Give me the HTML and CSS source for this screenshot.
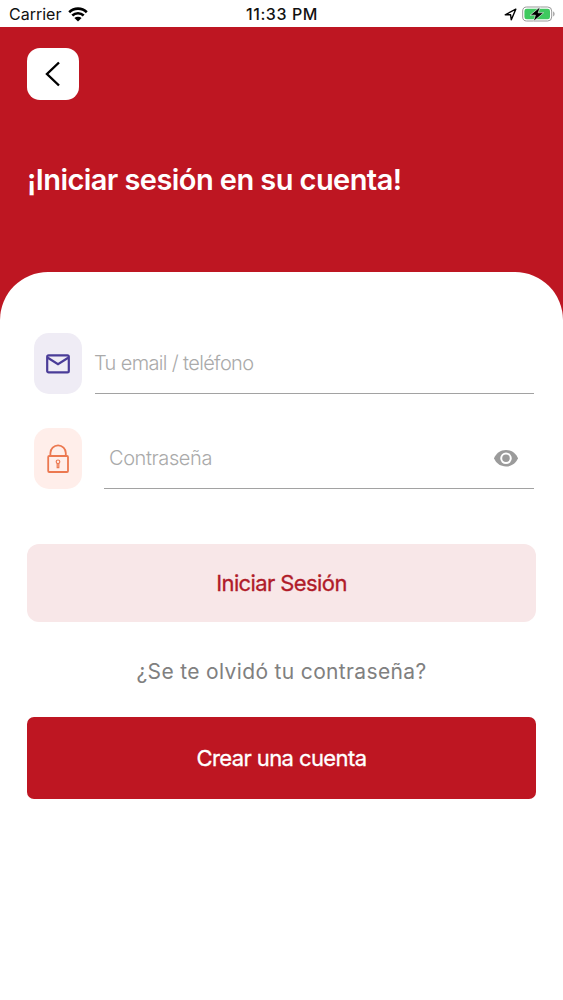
FILE: index.html
```html
<!DOCTYPE html>
<html lang="es">
    <head>
        <meta charset="UTF-8" />
        <meta name="viewport" content="width=device-width, initial-scale=1.0" />
        <title>Iniciar sesión</title>
        <link rel="stylesheet" href="styles.css">
    </head>
    <body>
        <div class="status">
            <div class="carrier">
                <span>Carrier</span>
                <svg class="wifi" viewBox="0 0 20 15">
                    <path d="M1.2 5.2a12.6 12.6 0 0 1 17.6 0M4.3 8.5a8.2 8.2 0 0 1 11.4 0" />
                    <path class="dot" d="M10 14.6l-3.6-3.5a5.2 5.2 0 0 1 7.2 0z" />
                </svg>
            </div>
            <div class="time">11:33 PM</div>
            <div class="power">
                <svg class="location" viewBox="0 0 13 13">
                    <path d="M1.2 6.8L11.8 1.2 7.3 11.8 6.6 6.8z" />
                </svg>
                <svg class="battery" viewBox="0 0 34 16">
                    <rect class="shell" x=".7" y="1" width="29" height="14" rx="4" />
                    <rect class="level" x="2.4" y="2.7" width="25.6" height="10.6" rx="2.4" />
                    <path class="cap" d="M31.2 5.6c1.8.6 1.8 4.2 0 4.8z" />
                    <path class="bolt" d="M18.2.8L8.2 9.2h5.2l-2 6.2 10.2-8.600h-5.400z" />
                </svg>
            </div>
        </div>

        <div class="header">
            <button class="back">
                <svg viewBox="0 0 16 26">
                    <path d="M14 1.5L2 13l12 11.5" />
                </svg>
            </button>
            <h1>¡Iniciar sesión en su cuenta!</h1>
        </div>

        <div class="sheet">
            <form class="form">
                <div class="field email">
                    <div class="icon">
                        <svg viewBox="0 0 24 20">
                            <rect x="1.2" y="1.4" width="21.6" height="17" rx="1.4" />
                            <path d="M1.8 3.8L12 10.2l10.2-6.4" />
                        </svg>
                    </div>
                    <div class="line">
                        <input type="text" placeholder="Tu email / teléfono" />
                    </div>
                </div>
                <div class="field password">
                    <div class="icon">
                        <svg viewBox="0 0 22 30">
                            <rect x="1.2" y="12" width="19.8" height="16" rx="1" />
                            <path d="M3.4 12V9a7.7 7.7 0 0 1 15.4 0v3" />
                            <circle class="key" cx="11" cy="17.8" r="1.8" />
                            <path class="key" d="M10.2 19.4v4.2h1.6v-4.2" />
                        </svg>
                    </div>
                    <div class="line">
                        <input type="password" placeholder="Contraseña" />
                        <svg class="eye" viewBox="0 0 24 18">
                            <path d="M12 .9C6.6.9 2 4.3 0 9.3c2 5 6.6 8.2 12 8.2s10-3.2 12-8.2C22 4.3 17.4.9 12 .9z" />
                            <circle class="ring" cx="12" cy="9.3" r="4.8" />
                        </svg>
                    </div>
                </div>
                <button class="login">Iniciar Sesión</button>
            </form>
            <a class="forgot">¿Se te olvidó tu contraseña?</a>
            <button class="create">Crear una cuenta</button>
        </div>
    </body>
</html>
```

FILE: styles.css
```css
* {
    margin: 0;
    padding: 0;
    box-sizing: border-box;
    outline: none;
    border: none;
}
body {
    min-height: 1000px;
    background: #be1622;
    font-family: Inter, sans-serif;
    display: flex;
    flex-direction: column;
}
svg {
    display: block;
    fill: none;
}

/* status bar */
.status {
    height: 27px;
    padding: 1px 8px 0 9px;
    background: #fff;
    color: #111;
    font-size: 16px;
    display: grid;
    grid-template-columns: 1fr auto 1fr;
    align-items: center;
}
.carrier {
    display: flex;
    align-items: center;
    gap: 7px;
}
.wifi {
    width: 20px;
    height: 15px;
    stroke: #000;
    stroke-width: 2.6;
}
.wifi .dot {
    fill: #000;
    stroke: none;
}
.time {
    font-weight: 500;
    font-size: 16px;
    letter-spacing: .6px;
}
.power {
    display: flex;
    justify-content: flex-end;
    align-items: center;
    gap: 5px;
}
.location {
    width: 13px;
    height: 13px;
    stroke: #000;
    stroke-width: 1.4;
    stroke-linejoin: round;
}
.battery {
    width: 34px;
    height: 16px;
    margin-right: -1px;
}
.battery .shell {
    stroke: #999;
}
.battery .level {
    fill: #3fc95f;
}
.battery .cap {
    fill: #999;
}
.battery .bolt {
    fill: #000;
    stroke: #fff;
    stroke-width: .6;
}

/* red header */
.header {
    height: 245px;
    padding: 21px 27px 0;
}
.back {
    width: 52px;
    height: 52px;
    border-radius: 13px;
    background: #fff;
    display: flex;
    justify-content: center;
    align-items: center;
}
.back svg {
    width: 16px;
    height: 26px;
    stroke: #000;
    stroke-width: 2.4;
}
.header h1 {
    margin-top: 62px;
    font-size: 29px;
    line-height: 36px;
    font-weight: 600;
    letter-spacing: -.57px;
    color: #fff;
}

/* white sheet */
.sheet {
    flex: 1;
    padding: 61px 27px 0;
    background: #fff;
    border-radius: 48px 48px 0 0;
    display: flex;
    flex-direction: column;
}
.form {
    display: flex;
    flex-direction: column;
}
.field {
    height: 61px;
    margin: 0 2px 34px 7px;
    display: flex;
}
.field .icon {
    width: 48px;
    height: 61px;
    border-radius: 15px;
    display: flex;
    justify-content: center;
    align-items: center;
}
.field .line {
    flex: 1;
    margin-left: 13px;
    border-bottom: 1px solid #a2a2a2;
    display: flex;
    align-items: center;
}
.field input {
    flex: 1;
    min-width: 0;
    background: none;
    font-family: Inter, sans-serif;
    font-size: 20px;
    font-weight: 300;
    letter-spacing: -.65px;
}
.field input::placeholder {
    color: #aaa;
}
.email .icon {
    background: #efecf5;
}
.email svg {
    width: 24px;
    height: 20px;
    stroke: #4a3c98;
    stroke-width: 2.2;
}
.email input {
    margin-left: -1px;
}
.password .icon {
    background: #ffeeea;
}
.password .icon svg {
    width: 22px;
    height: 30px;
    stroke: #ec7850;
    stroke-width: 1.8;
}
.password .icon .key {
    stroke-width: 1.2;
}
.password .line {
    margin-left: 22px;
    padding: 0 16px 0 5px;
}
.password input {
    letter-spacing: -.4px;
}
.eye {
    width: 24px;
    height: 18px;
    fill: #9b9b9b;
}
.eye .ring {
    stroke: #fff;
    stroke-width: 2;
}

.login,
.create {
    font-family: Inter, sans-serif;
    font-size: 22px;
    font-weight: 400;
    letter-spacing: -.6px;
    -webkit-text-stroke: .3px;
}
.login {
    height: 78px;
    margin-top: 21px;
    border-radius: 12px;
    background: #f8e7e8;
    color: #b01b29;
}
.forgot {
    margin: 36px 0 32px;
    line-height: 27px;
    font-size: 21px;
    letter-spacing: .35px;
    text-align: center;
    color: #808080;
}
.create {
    height: 82px;
    border-radius: 7px;
    background: #be1622;
    color: #fff;
}
```
